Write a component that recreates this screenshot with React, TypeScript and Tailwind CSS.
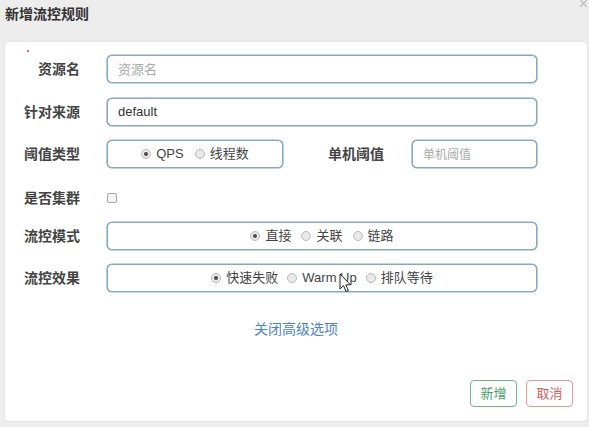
import React from "react";

const Radio = ({ checked, label }: { checked?: boolean; label: string }) => (
  <span className="flex items-center gap-[5px]">
    <span className="w-[10px] h-[10px] rounded-full border border-[#b9b9b9] bg-[#e9e9e9] flex items-center justify-center">
      {checked && <span className="w-[4px] h-[4px] rounded-full bg-[#4a4a4a]" />}
    </span>
    <span>{label}</span>
  </span>
);

const box =
  "h-[28px] rounded-[5px] border border-[#86a8c1] shadow-[0_0_0_0.6px_#86a8c1] bg-white";

const Label = ({ children, w = "w-[75px]" }: { children: React.ReactNode; w?: string }) => (
  <div className={`${w} text-right text-[14px] font-bold text-[#444] leading-[20px]`}>{children}</div>
);

export default function App() {
  return (
    <div className="relative w-[589px] h-[427px] overflow-hidden bg-[#ededed] font-['Liberation_Sans','Noto_Sans_CJK_SC',sans-serif]">
      <span className="absolute right-[1px] top-[-4px] text-[16px] leading-none text-[#bdbdbd]">×</span>
      <div className="h-[42px] pl-[5px] pt-[4px] text-[14px] font-bold leading-[20px] text-[#333]">
        新增流控规则
      </div>
      <div className="relative ml-[5px] w-[582px] h-[379px] rounded-[4px] bg-white shadow-[0_0_2px_rgba(0,0,0,0.12)] flex flex-col pt-[13px]">
        <span className="absolute left-[22px] top-[8px] w-[2px] h-[2px] rounded-full bg-[#d23a3a]" />
        {/* row 1 */}
        <div className="flex items-center h-[28px]">
          <Label>资源名</Label>
          <div className={`${box} ml-[27px] w-[430px] flex items-center px-[10px] text-[13px] text-[#aaa] font-['Noto_Sans_CJK_SC',sans-serif]`}>
            资源名
          </div>
        </div>
        {/* row 2 */}
        <div className="flex items-center h-[28px] mt-[15px]">
          <Label>针对来源</Label>
          <div className={`${box} ml-[27px] w-[430px] flex items-center px-[10px] text-[13px] text-[#333]`}>
            default
          </div>
        </div>
        {/* row 3 */}
        <div className="flex items-center h-[28px] mt-[14px]">
          <Label>阈值类型</Label>
          <div className={`${box} ml-[27px] w-[176px] flex items-center justify-center gap-[11px] text-[13px] text-[#444]`}>
            <Radio checked label="QPS" />
            <Radio label="线程数" />
          </div>
          <Label w="w-[101px]">单机阈值</Label>
          <div className={`${box} ml-[28px] w-[125px] flex items-center px-[10px] text-[12px] text-[#aaa] font-['Noto_Sans_CJK_SC',sans-serif]`}>
            单机阈值
          </div>
        </div>
        {/* row 4 */}
        <div className="flex items-center h-[28px] mt-[16px]">
          <Label>是否集群</Label>
          <span className="ml-[27px] w-[10px] h-[10px] rounded-[2px] border border-[#a9a9a9] bg-[#f3f3f3]" />
        </div>
        {/* row 5 */}
        <div className="flex items-center h-[28px] mt-[10px]">
          <Label>流控模式</Label>
          <div className={`${box} ml-[27px] w-[430px] flex items-center justify-center gap-[10px] text-[13px] text-[#444]`}>
            <Radio checked label="直接" />
            <Radio label="关联" />
            <Radio label="链路" />
          </div>
        </div>
        {/* row 6 */}
        <div className="flex items-center h-[28px] mt-[14px]">
          <Label>流控效果</Label>
          <div className={`${box} ml-[27px] w-[430px] flex items-center justify-center gap-[9px] text-[13px] text-[#444]`}>
            <Radio checked label="快速失败" />
            <Radio label="Warm Up" />
            <Radio label="排队等待" />
          </div>
        </div>
        <div className="mt-[27px] text-center text-[14px] leading-[20px] text-[#4d84c0]">关闭高级选项</div>
        <div className="mt-auto flex justify-end gap-[9px] pr-[14px] pb-[14px]">
          <button className="w-[47px] h-[27px] rounded-[4px] border border-[#6bb985] text-[13px] text-[#4c9c67] bg-white">
            新增
          </button>
          <button className="w-[47px] h-[27px] rounded-[4px] border border-[#e29a9a] text-[13px] text-[#d75d5d] bg-white">
            取消
          </button>
        </div>
      </div>
      <svg className="absolute left-[339px] top-[273px]" width="13" height="21" viewBox="0 0 13 21">
        <path d="M1 1 L1 16 L4.5 12.5 L7 18.5 L9.3 17.5 L6.8 11.8 L11.5 11.8 Z" fill="#fff" stroke="#222" strokeWidth="1" strokeLinejoin="round" />
      </svg>
    </div>
  );
}
